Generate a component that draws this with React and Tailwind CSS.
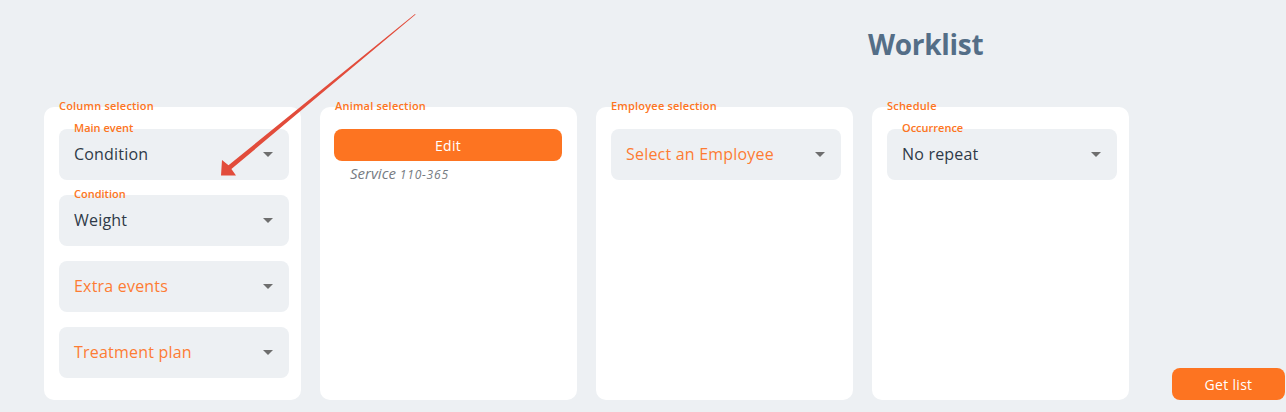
import React from "react";

const font = { fontFamily: '"Open Sans", "Liberation Sans", sans-serif' };

function Caret() {
  return (
    <svg width="10" height="5" viewBox="0 0 10 5" className="shrink-0">
      <polygon points="0,0 10,0 5,5" fill="#6e6e6e" />
    </svg>
  );
}

function Select({ label, value, placeholder }) {
  return (
    <div className="relative h-[51px] w-full rounded-[8px] bg-[#edf0f3] flex items-center pl-[15px] pr-[16px]">
      {label && (
        <span className="absolute left-[15px] top-[-8px] text-[11px] leading-[14px] font-semibold text-[#fd7421]">
          {label}
        </span>
      )}
      <span
        className={
          "flex-1 text-[16px] leading-[22px] tracking-[0.2px] pb-[1px] " +
          (value ? "text-[#2f3a48]" : "text-[#fd7c33]")
        }
      >
        {value || placeholder}
      </span>
      <Caret />
    </div>
  );
}

function Card({ title, children }) {
  return (
    <div className="relative w-[257px] h-[293px] rounded-[10px] bg-white pt-[22px] pl-[15px] pr-[12px] flex flex-col gap-[15px]">
      <span className="absolute left-[15px] top-[-8px] text-[11px] leading-[14px] font-semibold tracking-[0.2px] text-[#fd7421]">
        {title}
      </span>
      {children}
    </div>
  );
}

export default function App() {
  return (
    <div className="relative w-full h-[412px] bg-[#edf0f3] overflow-hidden" style={font}>
      <div className="pt-[26px] pl-[868px] h-[107px]">
        <h1 className="text-[28px] leading-[36px] font-bold text-[#546e87] tracking-[-0.3px]">Worklist</h1>
      </div>
      <div className="flex items-end pl-[44px]">
        <div className="flex gap-[19px]">
          <Card title="Column selection">
            <Select label="Main event" value="Condition" />
            <Select label="Condition" value="Weight" />
            <Select placeholder="Extra events" />
            <Select placeholder="Treatment plan" />
          </Card>
          <Card title="Animal selection">
            <div className="flex flex-col w-[228px] -ml-[1px]">
              <button className="h-[32px] w-full rounded-[8px] bg-[#fd7421] text-white text-[14px] font-medium tracking-[0.3px]">
                Edit
              </button>
              <div className="mt-[2px] pl-[16px] italic text-[#767b82] leading-[20px]">
                <span className="text-[15px]">Service </span>
                <span className="text-[12px] tracking-[0.8px]">110-365</span>
              </div>
            </div>
          </Card>
          <Card title="Employee selection">
            <Select placeholder="Select an Employee" />
          </Card>
          <Card title="Schedule">
            <Select label="Occurrence" value="No repeat" />
          </Card>
        </div>
        <button className="ml-[43px] h-[32px] w-[113px] rounded-[8px] bg-[#fd7421] text-white text-[14px] font-medium tracking-[0.3px]">
          Get list
        </button>
      </div>
      <svg className="absolute left-0 top-0 pointer-events-none" width="1286" height="412">
        <polygon
          points="415,14 228.5,165.2 222,160 221,175.5 236,175.5 231.4,169 415.6,14.6"
          fill="#e24c3b"
        />
      </svg>
    </div>
  );
}
